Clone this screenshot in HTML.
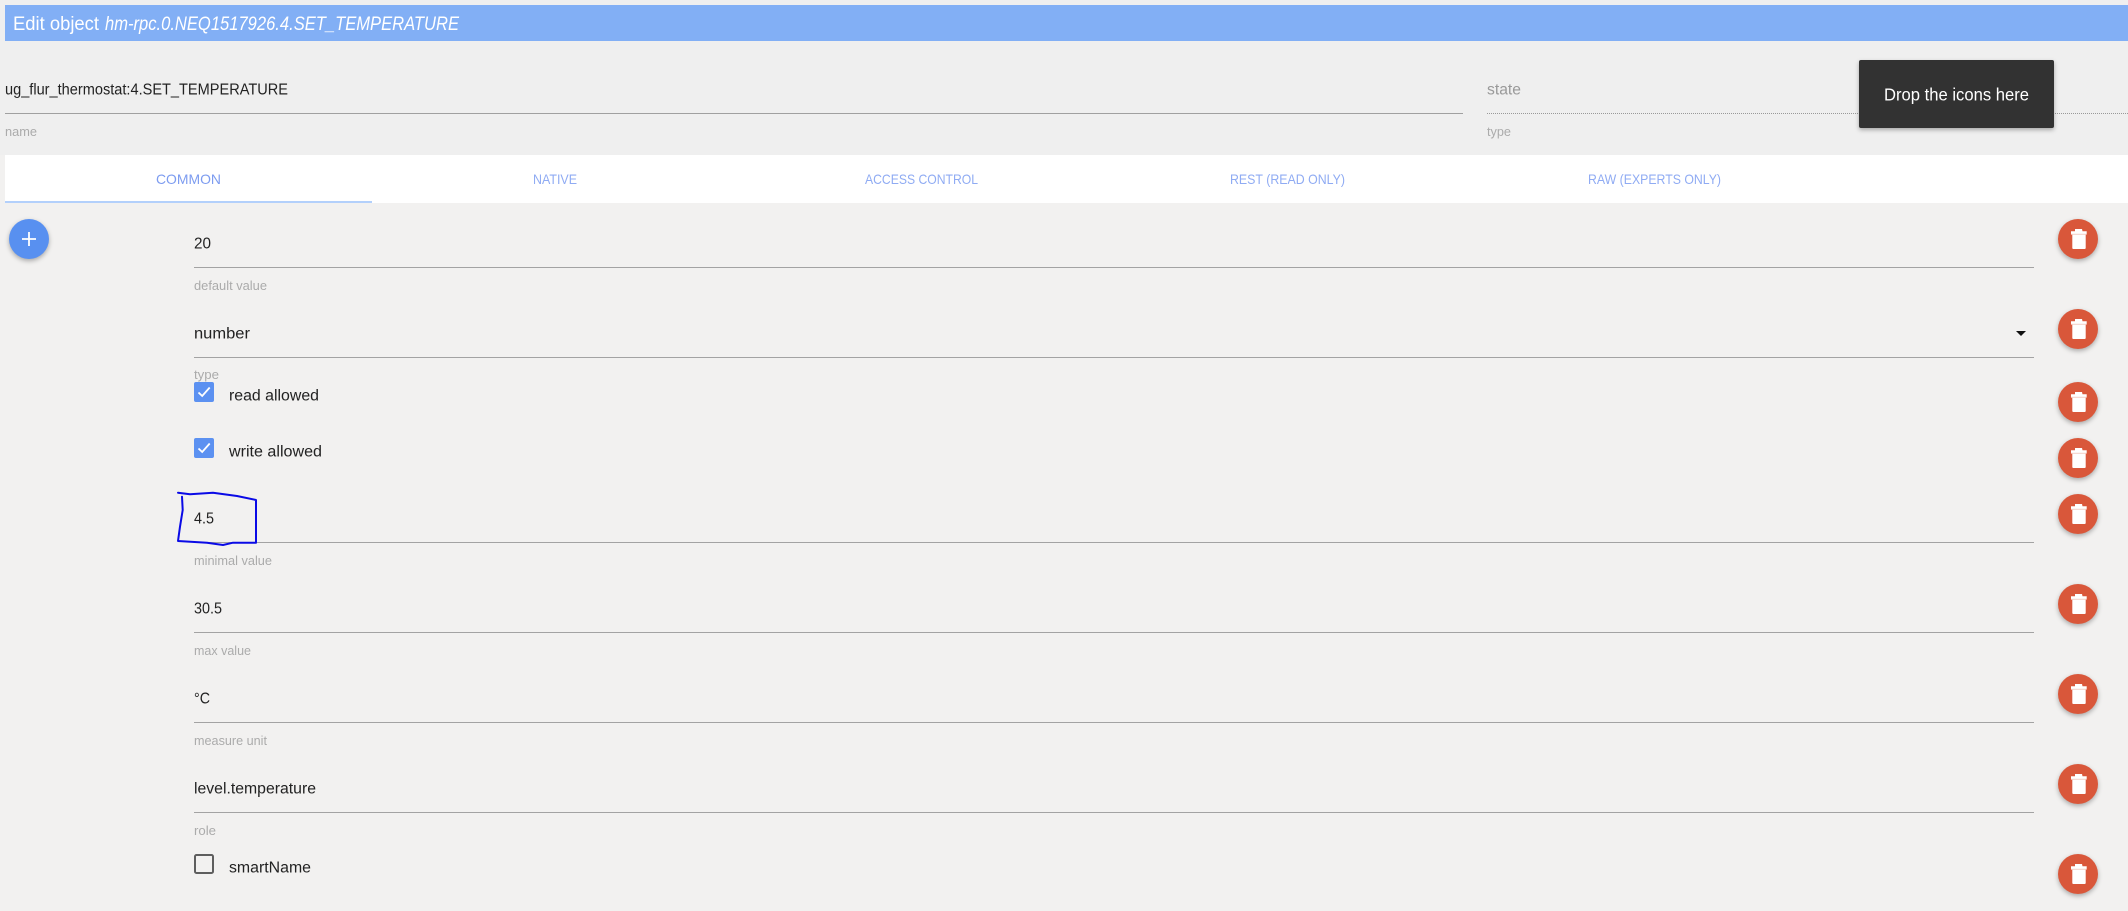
<!DOCTYPE html>
<html><head><meta charset="utf-8"><title>Edit object</title>
<style>
html,body{margin:0;padding:0;width:2128px;height:911px;overflow:hidden;background:#f2f1f0}
svg{position:absolute;left:0;top:0;display:block}
text{font-family:"Liberation Sans",sans-serif;font-size:15.500px;fill:#222}
.lb{font-size:13px;fill:#ababab}
.tab{font-size:14px;fill:#8fabf3}
.fab{filter:drop-shadow(0 2px 2.5px rgba(0,0,0,.3))}
</style></head><body>
<svg width="2128" height="911" viewBox="0 0 2128 911" xmlns="http://www.w3.org/2000/svg">
<defs>
<g id="del"><g class="fab"><circle cx="0" cy="0" r="20" fill="#d9573a"/></g>
<path d="M-3 -10h7l.5 2.300h4.200v2.700h-15.700v-2.700h4z" fill="#fff"/>
<rect x="-7" y="-5.200" width="15.700" height="1" fill="#f3c9c0"/>
<path d="M-5.700 -4.400h13.400v13.400a1 1 0 0 1-1 1h-11.400a1 1 0 0 1-1-1z" fill="#fff"/>
</g>
<g id="chk"><rect width="20" height="20" rx="2" fill="#5c91f1"/><path d="M4.500 10.500l3.700 3.500 7.500-8.500" fill="none" stroke="#fff" stroke-width="1.800"/></g>
</defs>

<rect width="2128" height="155" fill="#efefef"/>
<rect x="5" y="5" width="2123" height="36" fill="#82aff5"/>
<text x="13" y="30" style="font-size:19px;fill:#fff" textLength="86" lengthAdjust="spacingAndGlyphs">Edit object</text>
<text x="105" y="30" style="font-size:19px;fill:#fff;font-style:italic" textLength="354" lengthAdjust="spacingAndGlyphs">hm-rpc.0.NEQ1517926.4.SET_TEMPERATURE</text>

<text x="5" y="94.500" textLength="283" lengthAdjust="spacingAndGlyphs">ug_flur_thermostat:4.SET_TEMPERATURE</text>
<rect x="5" y="113" width="1458" height="1" fill="#a0a0a0"/>
<text x="5" y="136" class="lb" textLength="32" lengthAdjust="spacingAndGlyphs">name</text>
<text x="1487" y="94.500" style="fill:#999" textLength="34" lengthAdjust="spacingAndGlyphs">state</text>
<line x1="1487" y1="113.500" x2="2128" y2="113.500" stroke="#999" stroke-dasharray="1 1"/>
<text x="1487" y="136" class="lb" textLength="24" lengthAdjust="spacingAndGlyphs">type</text>

<rect x="5" y="155" width="2123" height="48" fill="#fff"/>
<rect x="5" y="201" width="367" height="2" fill="#b3d0fb"/>
<text x="156" y="184" class="tab" style="fill:#7d9cf0" textLength="65" lengthAdjust="spacingAndGlyphs">COMMON</text>
<text x="533" y="184" class="tab" textLength="44" lengthAdjust="spacingAndGlyphs">NATIVE</text>
<text x="865" y="184" class="tab" textLength="113" lengthAdjust="spacingAndGlyphs">ACCESS CONTROL</text>
<text x="1230" y="184" class="tab" textLength="115" lengthAdjust="spacingAndGlyphs">REST (READ ONLY)</text>
<text x="1588" y="184" class="tab" textLength="133" lengthAdjust="spacingAndGlyphs">RAW (EXPERTS ONLY)</text>

<g class="fab"><circle cx="29" cy="239" r="20" fill="#5890f0"/></g>
<path d="M29 232v14M22 239h14" stroke="#fff" stroke-width="1.800" fill="none"/>

<text x="194" y="248.500" textLength="17" lengthAdjust="spacingAndGlyphs">20</text>
<rect x="194" y="267" width="1840" height="1" fill="#a3a3a3"/>
<text x="194" y="290" class="lb" textLength="73" lengthAdjust="spacingAndGlyphs">default value</text>

<text x="194" y="338.500" textLength="56" lengthAdjust="spacingAndGlyphs">number</text>
<path d="M2016 331h10l-5 5z" fill="#111"/>
<rect x="194" y="357" width="1840" height="1" fill="#a3a3a3"/>
<text x="194" y="379" class="lb" textLength="25" lengthAdjust="spacingAndGlyphs">type</text>

<use href="#chk" x="194" y="382"/>
<text x="229" y="400.500" textLength="90" lengthAdjust="spacingAndGlyphs">read allowed</text>
<use href="#chk" x="194" y="438"/>
<text x="229" y="456.500" textLength="93" lengthAdjust="spacingAndGlyphs">write allowed</text>

<text x="194" y="523.500" textLength="20" lengthAdjust="spacingAndGlyphs">4.5</text>
<rect x="194" y="542" width="1840" height="1" fill="#a3a3a3"/>
<text x="194" y="565" class="lb" textLength="78" lengthAdjust="spacingAndGlyphs">minimal value</text>

<text x="194" y="613.500" textLength="28" lengthAdjust="spacingAndGlyphs">30.5</text>
<rect x="194" y="632" width="1840" height="1" fill="#a3a3a3"/>
<text x="194" y="655" class="lb" textLength="57" lengthAdjust="spacingAndGlyphs">max value</text>

<text x="194" y="703.500" textLength="16" lengthAdjust="spacingAndGlyphs">°C</text>
<rect x="194" y="722" width="1840" height="1" fill="#a3a3a3"/>
<text x="194" y="745" class="lb" textLength="73" lengthAdjust="spacingAndGlyphs">measure unit</text>

<text x="194" y="793.500" textLength="122" lengthAdjust="spacingAndGlyphs">level.temperature</text>
<rect x="194" y="812" width="1840" height="1" fill="#a3a3a3"/>
<text x="194" y="835" class="lb" textLength="22" lengthAdjust="spacingAndGlyphs">role</text>

<rect x="195" y="855" width="18" height="18" rx="1.500" fill="none" stroke="#5e5e5e" stroke-width="2"/>
<text x="229" y="872.500" textLength="82" lengthAdjust="spacingAndGlyphs">smartName</text>

<path d="M178 492.700L190 494.300L213 492.700L237 496L256 500V542.700H233L223 545L207 542.700L178 541L180 526.700L182.700 510L182 496.700" fill="none" stroke="#0a0ae6" stroke-width="2" stroke-linejoin="round" stroke-linecap="round"/>

<use href="#del" x="2078" y="239"/>
<use href="#del" x="2078" y="329"/>
<use href="#del" x="2078" y="402"/>
<use href="#del" x="2078" y="458"/>
<use href="#del" x="2078" y="514"/>
<use href="#del" x="2078" y="604"/>
<use href="#del" x="2078" y="694"/>
<use href="#del" x="2078" y="784"/>
<use href="#del" x="2078" y="874"/>

<g style="filter:drop-shadow(0 2px 2px rgba(0,0,0,.3))"><rect x="1859" y="60" width="195" height="68" rx="2" fill="#323232"/></g>
<text x="1884" y="100.500" style="font-size:17.500px;fill:#fff" textLength="145" lengthAdjust="spacingAndGlyphs">Drop the icons here</text>
</svg>
</body></html>
